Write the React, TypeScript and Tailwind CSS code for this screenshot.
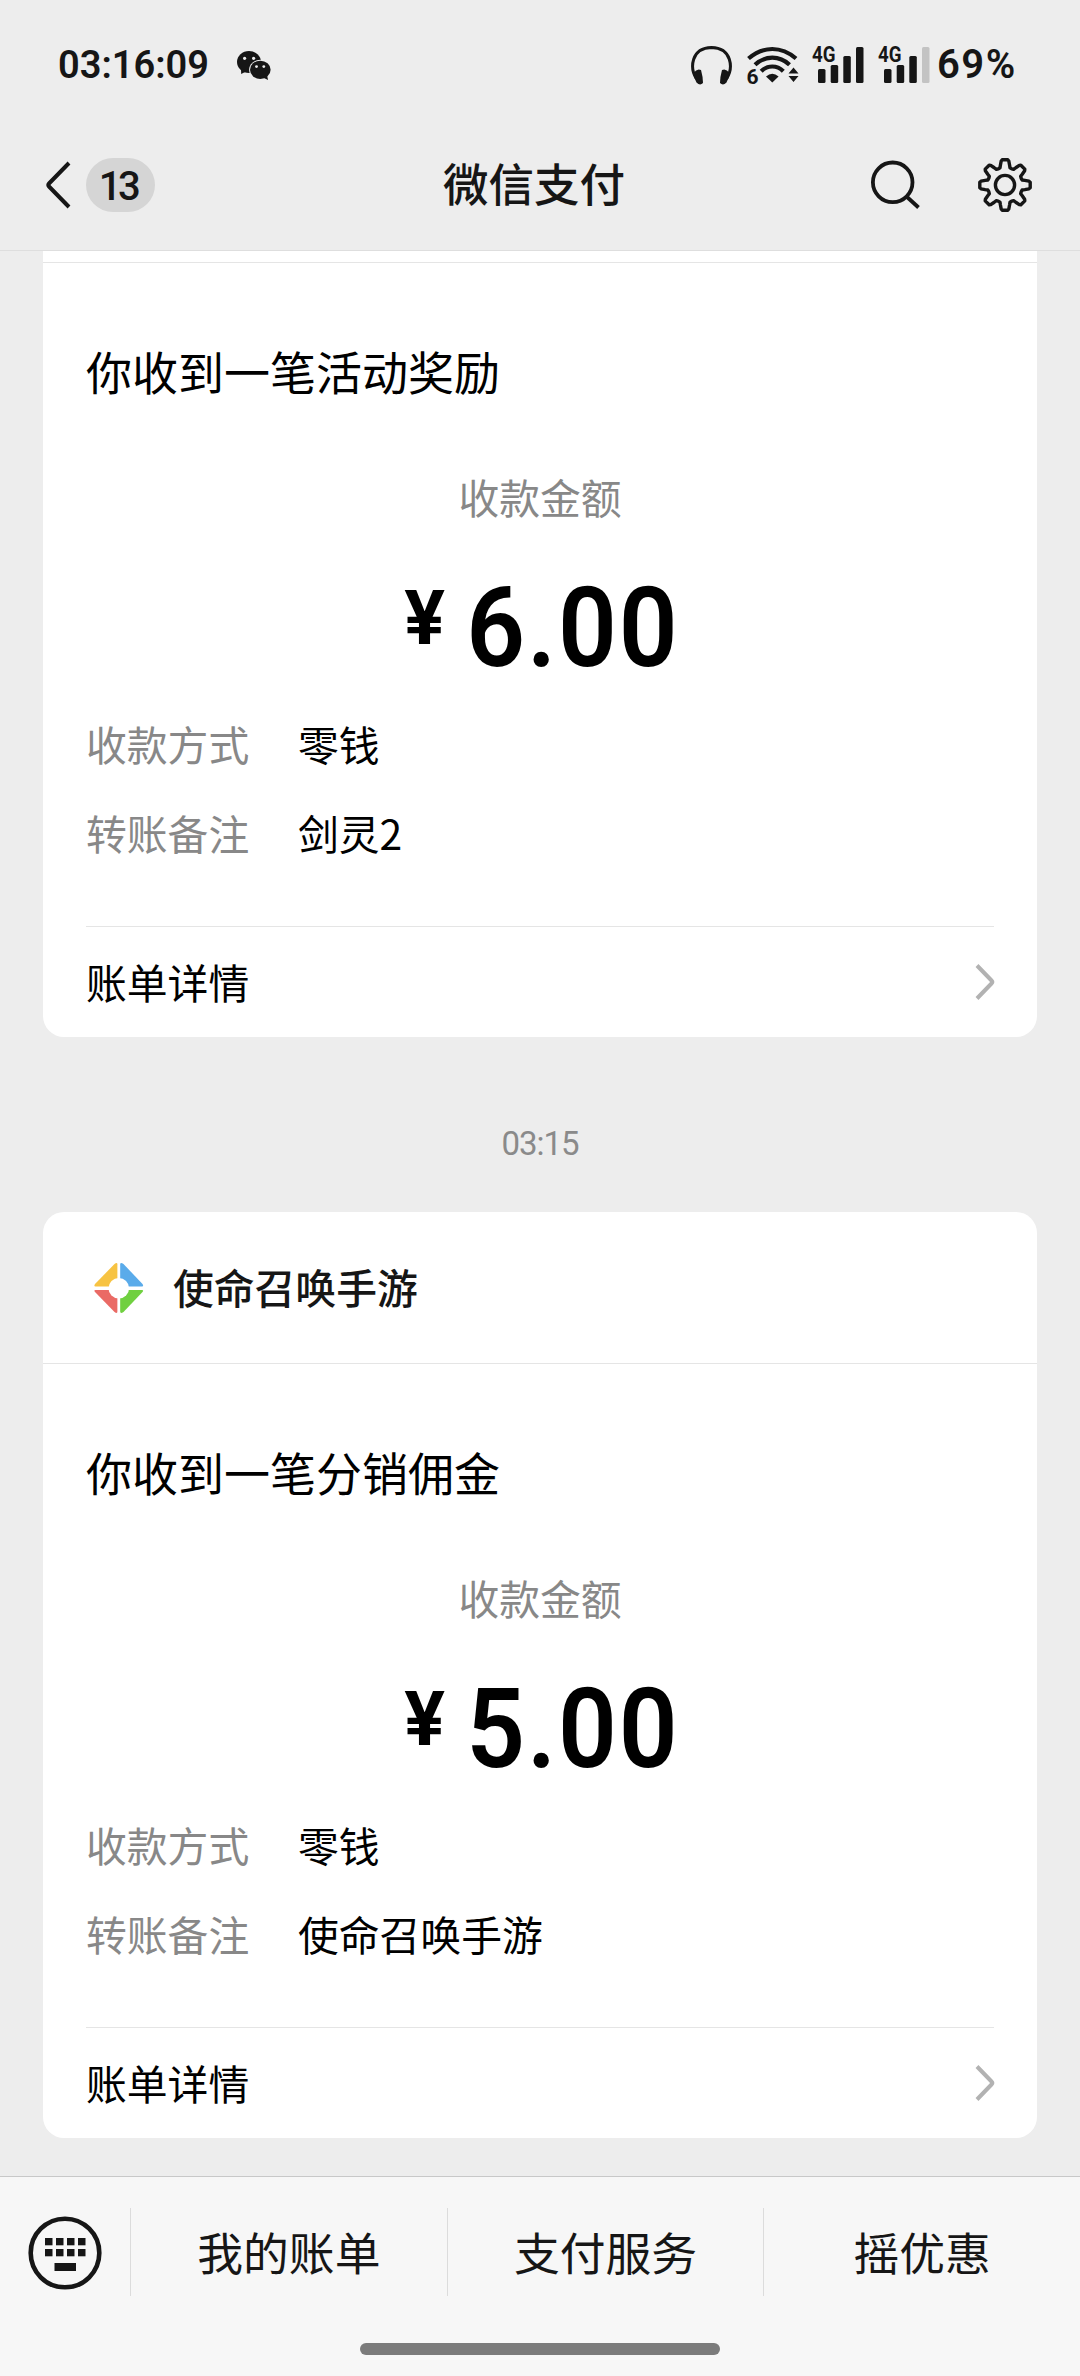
import type { ReactNode } from "react"

type Payment = {
  merchant?: string
  title: string
  amount: string
  method: string
  remark: string
}

const payments: Payment[] = [
  {
    title: "你收到一笔活动奖励",
    amount: "6.00",
    method: "零钱",
    remark: "剑灵2",
  },
  {
    merchant: "使命召唤手游",
    title: "你收到一笔分销佣金",
    amount: "5.00",
    method: "零钱",
    remark: "使命召唤手游",
  },
]

const WechatIcon = () => (
  <svg width="34" height="29" viewBox="0 0 34 29" fill="#161616">
    <ellipse cx="12" cy="11" rx="12" ry="11" />
    <path d="M4 17 L4.2 23 L10 20 Z" />
    <ellipse cx="23.3" cy="18.8" rx="11.2" ry="10" fill="#ededed" />
    <ellipse cx="23.3" cy="18.8" rx="10.3" ry="9.1" />
    <path d="M26 26.5 L31 29 L30 24 Z" />
    <circle cx="7.6" cy="7.3" r="1.6" fill="#ededed" />
    <circle cx="16.6" cy="7.3" r="1.6" fill="#ededed" />
    <circle cx="19.5" cy="15.6" r="1.4" fill="#ededed" />
    <circle cx="26.8" cy="15.6" r="1.4" fill="#ededed" />
  </svg>
)

const HeadphonesIcon = () => (
  <svg width="41" height="39" viewBox="0 0 41 39" fill="#161616">
    <path
      d="M5.5 33 C-1.5 22 0 2 20.5 1.6 C41 2 42.5 22 35.5 33"
      fill="none"
      stroke="#161616"
      strokeWidth="3"
    />
    <path d="M2.5 27 Q6 22 10 24 Q12 31 12 37 Q9 40 5.5 36.5 Q3 32 2.5 27 Z" />
    <path d="M38.5 27 Q35 22 31 24 Q29 31 29 37 Q32 40 35.5 36.5 Q38 32 38.5 27 Z" />
  </svg>
)

const WifiIcon = () => (
  <svg width="52" height="38" viewBox="0 0 52 38" fill="#161616" className="overflow-visible">
    <g fill="none" stroke="#161616" strokeWidth="4.2">
      <path d="M1.5 12.5 Q12.5 3 25.3 3 Q38 3 49 12.5" />
      <path d="M8 18.8 Q15.5 11.7 25.3 11.7 Q35 11.7 42.5 18.8" />
      <path d="M14.2 25.3 Q19 20.5 25.3 20.5 Q31.5 20.5 36.3 25.3" />
    </g>
    <path d="M25.3 36.5 L19 30.5 Q25.3 25 31.6 30.5 Z" />
    <path d="M46.5 21.5 L51.5 27.5 H41.5 Z M46.5 36 L51.5 30 H41.5 Z" />
    <text
      x="-0.5"
      y="37.5"
      fontSize="21"
      fontWeight="700"
      fontFamily="Roboto, sans-serif"
      stroke="#ededed"
      strokeWidth="2"
      paintOrder="stroke"
    >
      6
    </text>
  </svg>
)

const SignalIcon = (props: { lastBar: string }) => (
  <svg width="52" height="38" viewBox="0 0 52 38" fill="#161616" className="overflow-visible">
    <rect x="6" y="23" width="7.5" height="14" rx="1.5" />
    <rect x="18.7" y="19" width="7.5" height="18" rx="1.5" />
    <rect x="31.3" y="10" width="7.5" height="27" rx="1.5" />
    <rect x="44" y="1" width="7.5" height="36" rx="1.5" fill={props.lastBar} />
    <text
      x="0"
      y="16"
      fontSize="22"
      fontWeight="700"
      fontFamily="Roboto, sans-serif"
      textLength="23.5"
      lengthAdjust="spacingAndGlyphs"
    >
      4G
    </text>
  </svg>
)

const StatusBar = () => (
  <div className="flex h-[130px] items-center justify-between pl-[58px] pr-[63px] text-[#161616]">
    <div className="flex items-center">
      <span className="w-[151px] whitespace-nowrap font-['Roboto',sans-serif] text-[38px] font-semibold leading-none">
        03:16:09
      </span>
      <span className="ml-[28px]">
        <WechatIcon />
      </span>
    </div>
    <div className="flex items-center">
      <HeadphonesIcon />
      <span className="ml-[15px]">
        <WifiIcon />
      </span>
      <span className="ml-[13px]">
        <SignalIcon lastBar="#161616" />
      </span>
      <span className="ml-[14px]">
        <SignalIcon lastBar="#c3c3c3" />
      </span>
      <span className="ml-[7px] w-[80px] whitespace-nowrap font-['Roboto',sans-serif] text-[40px] font-semibold leading-none tracking-[1.5px]">
        69%
      </span>
    </div>
  </div>
)

// one tooth pointing up, repeated every 45 degrees
const tooth: [number, number][] = [
  [-6.6, -16.2],
  [-5, -17.2],
  [-4.6, -19.8],
  [-3.8, -24],
  [-2.8, -25.2],
  [2.8, -25.2],
  [3.8, -24],
  [4.6, -19.8],
  [5, -17.2],
]

const gearPoints = Array.from({ length: 8 }, (_, i) => {
  const a = (i * Math.PI) / 4
  return tooth
    .map(([x, y]) => {
      const px = x * Math.cos(a) - y * Math.sin(a)
      const py = x * Math.sin(a) + y * Math.cos(a)
      return `${px.toFixed(2)},${py.toFixed(2)}`
    })
    .join(" ")
}).join(" ")

const GearIcon = () => (
  <svg
    width="56"
    height="56"
    viewBox="-28 -28 56 56"
    fill="none"
    stroke="#161616"
    strokeWidth="3.4"
    strokeLinejoin="round"
  >
    <polygon points={gearPoints} />
    <circle r="9.6" />
  </svg>
)

const SearchIcon = () => (
  <svg width="50" height="50" viewBox="0 0 50 50" fill="none" stroke="#161616" strokeWidth="3.8">
    <circle cx="22.7" cy="22.3" r="19.8" />
    <path d="M36.5 36.5 L48.5 47.5" />
  </svg>
)

const NavBar = () => (
  <div className="grid h-[120px] grid-cols-[1fr_auto_1fr] items-start text-[#161616]">
    <div className="flex h-[110px] items-center pl-[45px]">
      <svg width="27" height="48" viewBox="0 0 27 48" fill="none" stroke="#161616" strokeWidth="4">
        <path d="M24 2 L4 22.5 Q2.5 24 4 25.5 L24 46" />
      </svg>
      <span className="ml-[14px] flex h-[54px] w-[69px] items-center justify-center rounded-full bg-[#d5d5d5] pr-[5px] pt-[3px] font-['Roboto',sans-serif] text-[40px] font-medium leading-none tracking-[-3.5px]">
        13
      </span>
    </div>
    <h1 className="relative -left-[6px] h-[104px] text-[45.5px] font-medium leading-[104px]">
      微信支付
    </h1>
    <div className="flex h-[110px] items-center justify-end pr-[47px]">
      <SearchIcon />
      <span className="ml-[57px]">
        <GearIcon />
      </span>
    </div>
  </div>
)

const MerchantLogo = () => (
  <svg width="50" height="50" viewBox="0 0 50 50">
    <path d="M20.5 1 Q23.4 -1 23.4 1.5 V23.5 H1.5 Q-0.5 23.5 1 21 Z" fill="#f7c342" />
    <path d="M29.5 1 Q26.2 -1 26.2 1.5 V23.5 H48 Q50 23.5 48.5 21 Z" fill="#5aabea" />
    <path d="M20.5 49 Q23.4 51 23.4 48.5 V27 H1.5 Q-0.5 27 1 29 Z" fill="#ea6a65" />
    <path d="M29.5 49 Q26.2 51 26.2 48.5 V27 H48 Q50 27 48.5 29 Z" fill="#70d040" />
    <circle cx="24.8" cy="25.2" r="10.3" fill="#ffffff" />
  </svg>
)

const DetailRow = (props: { label: string; children: ReactNode }) => (
  <div className="flex h-[89px] items-center">
    <span className="w-[212px] text-[#888888]">{props.label}</span>
    <span className="text-black">{props.children}</span>
  </div>
)

const PaymentCard = ({ payment }: { payment: Payment }) => (
  <section className="h-[926px] rounded-[21px] bg-white text-[40.8px] leading-none text-black">
    <div className="flex h-[151px] items-center pl-[51px]">
      {payment.merchant && (
        <>
          <MerchantLogo />
          <span className="ml-[29px] font-medium text-[#161616]">{payment.merchant}</span>
        </>
      )}
    </div>
    <div className="h-px bg-[#e5e5e5]" />
    <h2 className="mt-[75px] h-[64px] pl-[43px] text-[46px] leading-[64px]">{payment.title}</h2>
    <div className="mt-[67px] h-[56px] text-center leading-[56px] text-[#888888]">收款金额</div>
    <div className="mt-[47px] flex h-[112px] justify-center pl-[6px] font-['Roboto',sans-serif]">
      <span className="mr-[19px] text-[76px] font-bold leading-[93px]">¥</span>
      <span className="-mx-[7px] origin-center scale-x-[0.92] text-[112px] font-semibold leading-[112px] tracking-[2px]">
        {payment.amount}
      </span>
    </div>
    <div className="mt-[16px] pl-[43px]">
      <DetailRow label="收款方式">{payment.method}</DetailRow>
      <DetailRow label="转账备注">{payment.remark}</DetailRow>
    </div>
    <div className="mx-[43px] mt-[48px] h-px bg-[#e5e5e5]" />
    <div className="flex h-[110px] items-center justify-between pl-[43px] pr-[42px]">
      <span>账单详情</span>
      <svg width="20" height="38" viewBox="0 0 20 38" fill="none" stroke="#b2b2b2" strokeWidth="4">
        <path d="M2 2.5 L16.5 17.5 Q18 19 16.5 20.5 L2 35.5" />
      </svg>
    </div>
  </section>
)

const KeyboardIcon = () => (
  <svg width="74" height="74" viewBox="0 0 74 74" fill="#161616">
    <circle cx="37" cy="37" r="34.3" fill="none" stroke="#161616" strokeWidth="4.6" />
    {[17, 28, 39, 50].map((x) => (
      <g key={x}>
        <rect x={x} y="22" width="7.5" height="7.3" />
        <rect x={x} y="33" width="7.5" height="7.3" />
      </g>
    ))}
    <rect x="26.5" y="47" width="21.5" height="8" />
  </svg>
)

const BottomBar = () => (
  <footer className="flex h-[200px] flex-col items-center border-t border-[#c8c8c8] bg-[#f7f7f7] text-[45.8px] text-[#161616]">
    <div className="mt-[31px] flex h-[88px] w-full items-center leading-[86px]">
      <div className="flex w-[130px] justify-center pt-px">
        <KeyboardIcon />
      </div>
      {["我的账单", "支付服务", "摇优惠"].map((item) => (
        <div key={item} className="h-[88px] flex-1 border-l border-[#dcdcdc] text-center">
          {item}
        </div>
      ))}
    </div>
    <div className="mt-[47px] h-[12px] w-[360px] rounded-full bg-[#7b7b7b]" />
  </footer>
)

const App = () => (
  <main className="flex h-[2376px] w-[1080px] flex-col overflow-hidden bg-[#ededed] font-['Noto_Sans_CJK_SC',sans-serif]">
    <header className="h-[251px] shrink-0 border-b border-[#dedede]">
      <StatusBar />
      <NavBar />
    </header>
    <div className="h-[1925px] shrink-0 overflow-hidden px-[43px]">
      <div className="-mt-[140px]">
        <PaymentCard payment={payments[0]} />
        <div className="h-[175px] pt-[91px] text-center font-['Roboto',sans-serif] text-[33px] leading-[32px] tracking-[-1px] text-[#8a8a8a]">
          03:15
        </div>
        <PaymentCard payment={payments[1]} />
      </div>
    </div>
    <BottomBar />
  </main>
)

export default App
